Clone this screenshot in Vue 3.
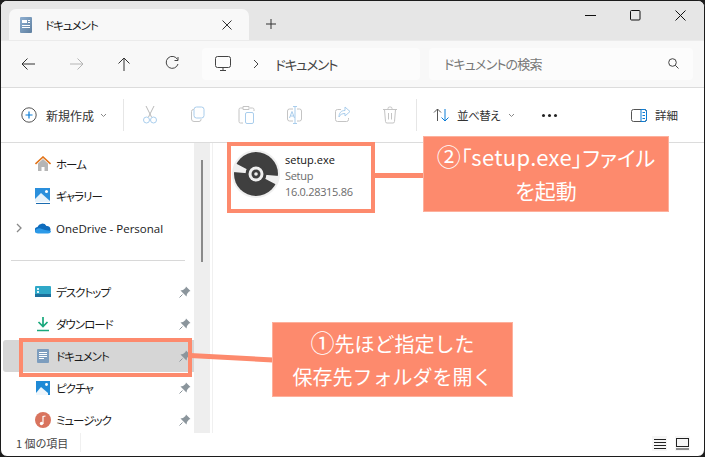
<script setup>
const upper = [
  { label: 'ホーム', icon: 'home' },
  { label: 'ギャラリー', icon: 'gallery' },
  { label: 'OneDrive - Personal', icon: 'cloud', expand: true },
]
const lower = [
  { label: 'デスクトップ', icon: 'desktop' },
  { label: 'ダウンロード', icon: 'download' },
  { label: 'ドキュメント', icon: 'doc', active: true },
  { label: 'ピクチャ', icon: 'picture' },
  { label: 'ミュージック', icon: 'music' },
]
</script>

<template>
  <div class="window">
    <header class="titlebar">
      <div class="tab">
        <svg class="tab-icon" width="14" height="16" viewBox="0 0 14 16">
          <defs>
            <linearGradient id="docg" x1="0" y1="0" x2="1" y2="1">
              <stop offset="0" stop-color="#8fb0d2" />
              <stop offset="1" stop-color="#5f7f9f" />
            </linearGradient>
          </defs>
          <rect x="1" y="0" width="12" height="16" rx="1" fill="url(#docg)" />
          <path d="M3 3h5v3H3zM9 3h2v1H9zM9 5h2v1H9zM3 8h8v1H3zM3 10h8v1H3z" fill="#fff" />
        </svg>
        <span class="tab-title">ドキュメント</span>
        <svg class="tab-close" width="10" height="10" viewBox="0 0 10 10">
          <path d="M.5.5l9 9M9.5.5l-9 9" stroke="#333" fill="none" />
        </svg>
      </div>
      <svg class="tab-add" width="10" height="10" viewBox="0 0 10 10">
        <path d="M5 0v10M0 5h10" stroke="#333" fill="none" />
      </svg>
      <div class="win-buttons">
        <svg width="11" height="11" viewBox="0 0 11 11"><path d="M0 5.500h11" stroke="#111" fill="none" /></svg>
        <svg width="11" height="11" viewBox="0 0 11 11"><rect x=".5" y=".5" width="9.500" height="9.500" rx="1" stroke="#111" fill="none" /></svg>
        <svg width="11" height="11" viewBox="0 0 11 11"><path d="M.5.5l10 10M10.500.5l-10 10" stroke="#111" fill="none" /></svg>
      </div>
    </header>

    <div class="addressrow">
      <div class="nav-buttons">
        <svg width="48" height="16" viewBox="0 0 48 16"><path d="M18 8h13M18 8l5.500-5.500M18 8l5.500 5.500" stroke="#333" fill="none" /></svg>
        <svg width="48" height="16" viewBox="0 0 48 16"><path d="M31 8H18M31 8l-5.500-5.500M31 8l-5.500 5.500" stroke="#b4b4b4" fill="none" /></svg>
        <svg width="48" height="16" viewBox="0 0 48 16"><path d="M24 15V2M24 2l-5.500 5.500M24 2l5.500 5.500" stroke="#333" fill="none" /></svg>
        <svg width="48" height="16" viewBox="0 0 48 16"><path d="M29.500 3.500A6 6 0 1 0 30 8M30 1v3.500h-3.500" stroke="#444" fill="none" /></svg>
      </div>
      <div class="address">
        <svg width="16" height="16" viewBox="0 0 16 16" class="monitor">
          <rect x=".5" y=".5" width="15" height="11" rx="2" stroke="#444" fill="none" />
          <path d="M5 14.500h6M8 12v2" stroke="#444" fill="none" />
        </svg>
        <svg width="6" height="10" viewBox="0 0 6 10" class="crumb-sep"><path d="M1 1l4 4-4 4" stroke="#444" fill="none" /></svg>
        <span class="crumb">ドキュメント</span>
      </div>
      <div class="search">
        <span>ドキュメントの検索</span>
        <svg width="11" height="11" viewBox="0 0 11 11"><circle cx="4.500" cy="4.500" r="3.800" stroke="#444" fill="none" /><path d="M7.300 7.300l3.200 3.200" stroke="#444" fill="none" /></svg>
      </div>
    </div>

    <div class="toolbar">
      <div class="tool new">
        <svg width="16" height="16" viewBox="0 0 16 16">
          <circle cx="8" cy="8" r="7.200" stroke="#555" fill="none" />
          <path d="M8 4.500v7M4.500 8h7" stroke="#0a7cd6" stroke-width="1.200" fill="none" />
        </svg>
        <span>新規作成</span>
        <svg class="caret" width="7" height="5" viewBox="0 0 7 5"><path d="M1 1l2.500 2.500L6 1" stroke="#888" fill="none" /></svg>
      </div>
      <i class="sep"></i>
      <div class="icon-tools">
        <svg width="48" height="18" viewBox="0 0 48 18">
          <path d="M20 0l5.500 11M28 0l-5.500 11" stroke="#b9b9b9" fill="none" />
          <circle cx="20.500" cy="14" r="3" stroke="#a9cdec" fill="none" /><circle cx="27.500" cy="14" r="3" stroke="#a9cdec" fill="none" />
        </svg>
        <svg width="48" height="18" viewBox="0 0 48 18">
          <rect x="20" y="1" width="10" height="11" rx="2.500" stroke="#a9cdec" fill="none" />
          <path d="M20 4.500h-.5a2 2 0 0 0-2 2V14a2.500 2.500 0 0 0 2.500 2.500h5a2 2 0 0 0 2-2V14" stroke="#c4c4c4" fill="none" transform="translate(0 -1)" />
        </svg>
        <svg width="48" height="18" viewBox="0 0 48 18">
          <path d="M21 2h-2.500a1.500 1.500 0 0 0-1.500 1.500v12a1.500 1.500 0 0 0 1.500 1.500H21M28 2h2.500A1.500 1.500 0 0 1 32 3.500V5M21 .5h6v3h-6z" stroke="#c4c4c4" fill="none" />
          <rect x="23.500" y="6.500" width="8" height="11" rx="1.500" stroke="#a9cdec" fill="none" />
        </svg>
        <svg width="48" height="18" viewBox="0 0 48 18">
          <path d="M23 3h-3.500A2 2 0 0 0 17.500 5v8a2 2 0 0 0 2 2H23M27 3h2.500a2 2 0 0 1 2 2v8a2 2 0 0 1-2 2H27" stroke="#c4c4c4" fill="none" />
          <path d="M25 0v18M23 .5h4M23 17.500h4" stroke="#a9cdec" fill="none" />
          <path d="M19.500 12l2.500-6.500 2.500 6.500M20.300 10h3.400" stroke="#a9cdec" fill="none" />
        </svg>
        <svg width="48" height="18" viewBox="0 0 48 18">
          <path d="M23 3.500h-3.500a2 2 0 0 0-2 2v8a2 2 0 0 0 2 2h9a2 2 0 0 0 2-2V12" stroke="#c4c4c4" fill="none" />
          <path d="M27 1l5 4.500-5 4.500V7.500c-3 0-5 1-6 3.500 0-4 2-6.500 6-6.500z" stroke="#a9cdec" fill="none" />
        </svg>
        <svg width="48" height="18" viewBox="0 0 48 18">
          <path d="M17 3.500h14M22 3.500v-1a1.500 1.500 0 0 1 1.500-1.500h1A1.500 1.500 0 0 1 26 2.500v1M18.500 3.500l1 12a1.500 1.500 0 0 0 1.500 1.500h6a1.500 1.500 0 0 0 1.500-1.500l1-12M22.500 7v6.500M25.500 7v6.500" stroke="#c4c4c4" fill="none" />
        </svg>
      </div>
      <i class="sep"></i>
      <div class="tool sort">
        <svg width="17" height="14" viewBox="0 0 17 14">
          <path d="M4.500 13V1M1 4.500L4.500 1 8 4.500" stroke="#555" fill="none" />
          <path d="M12 1v12M8.500 9.500L12 13l3.500-3.500" stroke="#0a7cd6" fill="none" />
        </svg>
        <span>並べ替え</span>
        <svg class="caret" width="7" height="5" viewBox="0 0 7 5"><path d="M1 1l2.500 2.500L6 1" stroke="#888" fill="none" /></svg>
      </div>
      <div class="more"><b></b><b></b><b></b></div>
      <div class="tool details">
        <svg width="16" height="13" viewBox="0 0 16 13">
          <rect x=".5" y=".5" width="15" height="12" rx="2" stroke="#555" fill="none" />
          <path d="M10 .5h3.500a2 2 0 0 1 2 2v8a2 2 0 0 1-2 2H10z" stroke="#0a7cd6" fill="none" />
          <path d="M11.500 3.500h2.500M11.500 6.500h2.500M11.500 9.500h2.500" stroke="#0a7cd6" fill="none" />
        </svg>
        <span>詳細</span>
      </div>
    </div>

    <main class="body">
      <aside class="sidebar">
        <template v-for="group in [upper, lower]" :key="group[0].label">
          <div
            v-for="item in group"
            :key="item.label"
            class="nav-row"
            :class="{ active: item.active }"
          >
            <svg v-if="item.expand" class="expand" width="6" height="10" viewBox="0 0 6 10"><path d="M1 1l4 4-4 4" stroke="#888" stroke-width="1.300" fill="none" /></svg>
            <svg class="nav-icon" width="16" height="16" viewBox="0 0 16 16">
              <template v-if="item.icon === 'home'">
                <path d="M3 7.500L8 3l5 4.500V15H9.500v-4h-3v4H3z" fill="#b5b5b5" />
                <path d="M.5 8L8 1l7.500 7" stroke="#e2741a" stroke-width="1.600" fill="none" />
              </template>
              <template v-else-if="item.icon === 'gallery'">
                <rect width="15" height="14" fill="#2a8fdc" />
                <circle cx="11.500" cy="3.500" r="1.500" fill="#fff" />
                <path d="M0 11l6-6 9 8v1H0z" fill="#e6f2fb" />
                <path d="M1 15h14v1H1z" fill="#1a6bb0" />
              </template>
              <template v-else-if="item.icon === 'cloud'">
                <path d="M3 13a3 3 0 0 1-.5-6A5 5 0 0 1 11.500 6a3.600 3.600 0 0 1 1.500 7z" fill="#0f6cbd" />
                <path d="M0 11c1-3 5-3.500 7-2l3 1 6 1c0 1-1 2.500-3 2.500H3C1 13.500 0 12.500 0 11z" fill="#2c9ae8" />
              </template>
              <template v-else-if="item.icon === 'desktop'">
                <rect y="2" width="16" height="11" rx="1" fill="#2fa8c8" />
                <path d="M0 10h16v3H0z" fill="#1c6f9c" />
                <path d="M2 4h2v2H2zM2 7h2v2H2z" fill="#dff4fa" />
              </template>
              <template v-else-if="item.icon === 'download'">
                <path d="M8 1v9M3.500 6L8 10.500 12.500 6" stroke="#19a87c" stroke-width="1.700" fill="none" />
                <path d="M2 14.500h12" stroke="#19a87c" stroke-width="1.500" />
              </template>
              <template v-else-if="item.icon === 'doc'">
                <rect x="2" y="1" width="12" height="14" rx="1" fill="#7d9dbe" />
                <path d="M4 4h8v1H4zM4 6h8v1H4zM4 8h8v1H4zM4 10h5v1H4z" fill="#fff" />
              </template>
              <template v-else-if="item.icon === 'picture'">
                <rect x="1" y="1" width="14" height="14" fill="#1f8ad6" />
                <circle cx="11.500" cy="4.500" r="1.400" fill="#fff" />
                <path d="M1 13l5-6 7 6v2H1z" fill="#eef6fc" />
              </template>
              <template v-else>
                <circle cx="8" cy="8" r="8" fill="#d9745e" />
                <path d="M8 12V4.500l2.500-.5" stroke="#fff" stroke-width="1.200" fill="none" />
                <circle cx="6.500" cy="11.500" r="1.700" fill="#fff" />
              </template>
            </svg>
            <span class="nav-label" :class="{ latin: item.expand }">{{ item.label }}</span>
            <svg v-if="group === lower" class="pin" width="12" height="12" viewBox="0 0 12 12">
              <path d="M7 .5l4.500 4.500-1.500.5L8 8l-.5 2.500L1.500 4.500 4 4l2.500-2z" fill="#8b959c" />
              <path d="M3.500 8.500L.5 11.500" stroke="#8b959c" />
            </svg>
          </div>
          <hr v-if="group === upper" class="nav-div" />
        </template>
      </aside>
      <div class="track"><div class="thumb"></div></div>
      <section class="files">
        <div class="file">
          <svg class="disc" width="48" height="48" viewBox="0 0 48 48">
            <circle cx="24" cy="24" r="24" fill="#efefef" />
            <circle cx="24" cy="24" r="22" fill="#3f3f3f" />
            <path d="M24 24L3 13 1 22zM24 24L45 35 47 26z" fill="#efefef" />
            <circle cx="24" cy="24" r="10.500" fill="#3f3f3f" />
            <circle cx="24" cy="24" r="7.500" fill="#efefef" />
            <circle cx="24" cy="24" r="4.500" fill="#3f3f3f" />
            <circle cx="24" cy="24" r="1.800" fill="#efefef" />
          </svg>
          <div class="file-text">
            <div class="file-name">setup.exe</div>
            <div class="file-meta">Setup</div>
            <div class="file-meta">16.0.28315.86</div>
          </div>
        </div>
      </section>
    </main>

    <footer class="statusbar">
      <span class="count">1 個の項目</span>
      <i class="status-sep"></i>
      <div class="views">
        <span class="view on">
          <svg width="12" height="12" viewBox="0 0 12 12"><path d="M0 1.500h12M0 4.500h12M0 7.500h12M0 10.500h12" stroke="#222" fill="none" /></svg>
        </span>
        <span class="view on">
          <svg width="13" height="12" viewBox="0 0 13 12"><rect x=".5" y=".5" width="12" height="8" stroke="#222" fill="none" /><path d="M0 11h13" stroke="#222" /></svg>
        </span>
      </div>
    </footer>

    <!-- annotations lying over the window -->
    <div class="mark mark-doc"></div>
    <div class="mark mark-file"></div>
    <svg class="connectors" width="705" height="457" viewBox="0 0 705 457">
      <path d="M190 355.500L273 360M372 175.500H424" stroke="#fd8a6d" stroke-width="5" fill="none" />
    </svg>
    <div class="callout callout-1"><span class="num">①</span>先ほど指定した<br />保存先フォルダを開く</div>
    <div class="callout callout-2"><span class="num">②</span>「<span class="latin-big">setup.exe</span>」ファイル<br />を起動</div>
  </div>
</template>

<style scoped>
.window {
  position: relative;
  width: 705px;
  height: 457px;
  box-sizing: border-box;
  border: 1px solid #1c1c1c;
  border-radius: 7px;
  overflow: hidden;
  display: flex;
  flex-direction: column;
  background: #fff;
  color: #1a1a1a;
  font-family: "Noto Sans CJK JP", "Noto Sans", sans-serif;
  font-size: 12px;
  font-feature-settings: "palt";
}
.titlebar {
  height: 39px;
  flex: none;
  display: flex;
  align-items: flex-end;
  background: #e6e6e6;
  padding-left: 8px;
  box-sizing: border-box;
}
.tab {
  width: 240px;
  height: 31px;
  box-sizing: border-box;
  background: #f8f8f8;
  border-radius: 7px 7px 0 0;
  display: flex;
  align-items: center;
  padding: 0 17px 0 10px;
}
.tab-title {
  margin-left: 12px;
  flex: 1;
  font-size: 11.500px;
  letter-spacing: -1px;
}
.tab-add {
  margin: 0 0 11px 17px;
}
.win-buttons {
  margin-left: auto;
  align-self: flex-start;
  display: flex;
  gap: 34px;
  padding: 9px 18px 0 0;
}
.addressrow {
  height: 48px;
  flex: none;
  box-sizing: border-box;
  border-bottom: 1px solid #dcdcdc;
  border-top: 1px solid #ebebeb;
  padding-bottom: 1px;
  background: #f8f8f8;
  display: flex;
  align-items: center;
}
.nav-buttons {
  width: 201px;
  padding-left: 3px;
  box-sizing: border-box;
  display: flex;
}
.address,
.search {
  height: 32px;
  background: #fcfcfc;
  border-radius: 4px;
  display: flex;
  align-items: center;
  box-sizing: border-box;
}
.address {
  width: 218px;
  padding-left: 13px;
}
.crumb-sep {
  margin: 0 16px 0 22px;
}
.crumb {
  font-size: 13.500px;
  letter-spacing: -1.100px;
  color: #444;
}
.search {
  width: 264px;
  margin-left: 9px;
  padding: 0 14px 0 15px;
  justify-content: space-between;
  color: #777;
  font-size: 13px;
  letter-spacing: -.8px;
}
.toolbar {
  height: 55px;
  flex: none;
  box-sizing: border-box;
  border-bottom: 1px solid #dcdcdc;
  display: flex;
  align-items: center;
}
.tool {
  display: flex;
  align-items: center;
  font-size: 11.500px;
  color: #333;
}
.new {
  width: 122px;
  padding-left: 20px;
  box-sizing: border-box;
}
.new span {
  margin: 0 6px 0 9px;
  font-size: 12px;
}
.sep {
  width: 1px;
  height: 32px;
  background: #e6e6e6;
}
.icon-tools {
  width: 292px;
  padding-left: 2px;
  box-sizing: border-box;
  display: flex;
}
.sort {
  width: 110px;
  padding-left: 16px;
  box-sizing: border-box;
}
.sort span {
  margin: 0 8px 0 7px;
  letter-spacing: -.5px;
}
.more {
  display: flex;
  gap: 3px;
  width: 104px;
  padding-left: 15px;
  box-sizing: border-box;
}
.more b {
  width: 3px;
  height: 3px;
  border-radius: 50%;
  background: #222;
}
.details span {
  margin-left: 8px;
}
.body {
  flex: 1;
  min-height: 0;
  display: flex;
}
.sidebar {
  width: 193px;
  flex: none;
  padding: 5px 0 0 2px;
  box-sizing: border-box;
  overflow: hidden;
}
.nav-row {
  height: 32px;
  position: relative;
  display: flex;
  align-items: center;
  padding-left: 32px;
  border-radius: 3px 0 0 3px;
  font-size: 11.500px;
  letter-spacing: -1px;
}
.nav-row.active {
  background: #d6d6d6;
}
.expand {
  position: absolute;
  left: 13px;
  top: 11px;
}
.nav-label {
  margin-left: 5px;
}
.nav-label.latin {
  font-family: "Open Sans", "Noto Sans", sans-serif;
  font-size: 11.500px;
  letter-spacing: 0;
  font-feature-settings: normal;
}
.pin {
  margin-left: auto;
  margin-right: 3px;
}
.nav-div {
  margin: 16px 9px 15px 8px;
  border: 0;
  border-top: 1px solid #d8d8d8;
}
.track {
  width: 16px;
  flex: none;
  background: #eeeeee;
  position: relative;
}
.thumb {
  position: absolute;
  left: 7px;
  top: 17px;
  width: 2px;
  height: 102px;
  background: #8a8a8a;
}
.files {
  flex: 1;
  margin-left: 2px;
  border-left: 1px solid #f0f0f0;
}
.file {
  display: flex;
  padding: 7px 0 0 19px;
  gap: 5px;
}
.file-text {
  font-family: "Open Sans", "Noto Sans", sans-serif;
  font-size: 11px;
  line-height: 16px;
  font-feature-settings: normal;
  margin-top: 2px;
}
.file-name {
  color: #111;
}
.file-meta {
  color: #6b6b6b;
  letter-spacing: -.3px;
}
.statusbar {
  height: 23px;
  flex: none;
  display: flex;
  align-items: flex-start;
  padding: 0 14px 0 15px;
  box-sizing: border-box;
}
.count {
  font-size: 11px;
  color: #444;
  line-height: 21px;
}
.status-sep {
  width: 1px;
  height: 19px;
  background: #f0f0f0;
  margin-left: 12px;
}
.views {
  margin-left: auto;
  display: flex;
  gap: 8px;
}
.view {
  width: 15px;
  height: 15px;
  display: flex;
  align-items: center;
  justify-content: center;
  background: #f6f6f6;
  margin-top: 3px;
}
.mark {
  position: absolute;
  border: 4px solid #fd8a6d;
  box-sizing: border-box;
}
.mark-doc {
  left: 18px;
  top: 337px;
  width: 173px;
  height: 39px;
}
.mark-file {
  left: 226px;
  top: 141px;
  width: 148px;
  height: 71px;
}
.connectors {
  position: absolute;
  left: -1px;
  top: -1px;
}
.callout {
  position: absolute;
  box-sizing: border-box;
  background: #fd8a6d;
  border: 1px solid #fdb09c;
  color: #fff;
  font-size: 20px;
  line-height: 33px;
  text-align: center;
  padding-top: 4px;
  font-feature-settings: normal;
}
.num {
  font-size: 24px;
  line-height: 0;
}
.latin-big {
  font-size: 22px;
  line-height: 0;
  letter-spacing: .3px;
}
.callout-1 {
  left: 271px;
  top: 321px;
  width: 241px;
  height: 75px;
}
.callout-2 {
  left: 422px;
  top: 135px;
  width: 246px;
  height: 76px;
  font-size: 21px;
  font-feature-settings: "palt";
}
</style>

<style>
html,
body {
  background: #1c1c1c;
}
</style>
